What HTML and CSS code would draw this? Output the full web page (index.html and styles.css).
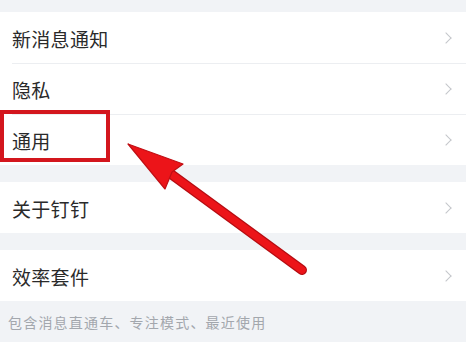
FILE: index.html
```html
<!DOCTYPE html>
<html lang="zh">
<head>
<meta charset="utf-8">
<title>设置</title>
<link rel="stylesheet" href="styles.css">
</head>
<body>
<div class="page">
  <div class="gap top"></div>
  <div class="group">
    <div class="row"><span class="label">新消息通知</span><span class="chev"></span></div>
    <div class="row"><span class="label">隐私</span><span class="chev"></span></div>
    <div class="row"><span class="label">通用</span><span class="chev"></span></div>
  </div>
  <div class="gap"></div>
  <div class="group">
    <div class="row"><span class="label">关于钉钉</span><span class="chev"></span></div>
  </div>
  <div class="gap"></div>
  <div class="group">
    <div class="row"><span class="label">效率套件</span><span class="chev"></span></div>
  </div>
  <div class="caption">包含消息直通车、专注模式、最近使用</div>

  <div class="highlight"></div>
  <svg class="arrow" width="466" height="342" viewBox="0 0 466 342">
    <line x1="160" y1="166" x2="302" y2="270" stroke="#b50d12" stroke-width="10" stroke-linecap="round"/>
    <line x1="160" y1="166" x2="302" y2="270" stroke="#ec1419" stroke-width="7.5" stroke-linecap="round"/>
    <polygon points="128,144 183,164 172,172 165,189" fill="#ec1419" stroke="#c00f14" stroke-width="1.2" stroke-linejoin="round"/>
  </svg>
</div>
</body>
</html>
```

FILE: styles.css
```css
* { box-sizing: border-box; margin: 0; padding: 0; }
html, body { width: 466px; height: 342px; overflow: hidden; }
body {
  background: #f1f3f6;
  font-family: "Noto Sans CJK SC", "Noto Sans", sans-serif;
}
.page { position: relative; width: 466px; height: 342px; }
.gap { height: 17px; }
.gap.top { height: 12px; }
.group { background: #ffffff; }
.row {
  height: 51px;
  display: flex;
  align-items: center;
  justify-content: space-between;
  padding: 0 14px 0 12px;
  position: relative;
}
.group .row + .row::before {
  content: "";
  position: absolute;
  left: 12px;
  right: 0;
  top: 0;
  height: 1px;
  background: #eceef1;
}
.label {
  font-size: 19px;
  color: #2a2a2a;
  line-height: 1;
  margin-top: 1px;
  letter-spacing: 0.3px;
}
.chev {
  width: 8px;
  height: 8px;
  border-top: 1.5px solid #c4c6ca;
  border-right: 1.5px solid #c4c6ca;
  transform: rotate(45deg);
  margin-right: 2px;
}
.caption {
  height: 41px;
  display: flex;
  align-items: center;
  padding-left: 8px;
  font-size: 14px;
  color: #a3a7ad;
  letter-spacing: 1.2px;
}
.highlight {
  position: absolute;
  left: 0;
  top: 110px;
  width: 110px;
  height: 52px;
  border: 4px solid #d3161d;
}
.arrow { position: absolute; left: 0; top: 0; }
```
